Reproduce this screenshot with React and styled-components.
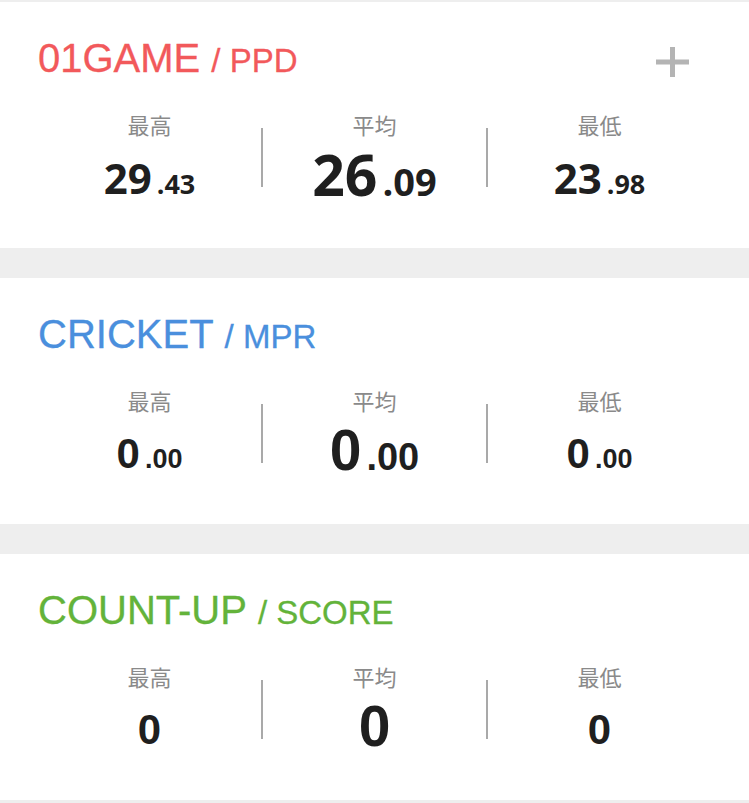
import React from "react";
import styled, { createGlobalStyle } from "styled-components";

const Global = createGlobalStyle`
  html, body { margin: 0; padding: 0; background: #eeeeee; }
  body { font-family: "Liberation Sans", Arial, sans-serif; }
  * { box-sizing: border-box; }
`;

const Page = styled.div`
  display: flex;
  flex-direction: column;
  gap: 30px;
  padding: 2px 0 4px;
  background: #eeeeee;
  width: 749px;
`;

const Card = styled.section`
  background: #ffffff;
  height: 246px;
  padding: 36px 38px 0;
  display: flex;
  flex-direction: column;
`;

const Header = styled.div`
  display: flex;
  align-items: flex-start;
  justify-content: space-between;
  height: 40px;
`;

const Title = styled.h2`
  margin: 0;
  display: flex;
  align-items: baseline;
  font-family: "Liberation Sans", Arial, sans-serif;
  font-weight: 400;
  font-size: 40px;
  line-height: 40px;
  color: ${(p) => p.$color};
  white-space: nowrap;
  -webkit-text-stroke: 0.3px ${(p) => p.$color};
`;

const Unit = styled.span`
  font-size: 33px;
  margin-left: 11px;
`;

const AddButton = styled.button`
  border: 0;
  background: none;
  padding: 0;
  margin: 9px 22px 0 0;
  width: 33px;
  height: 30px;
  display: flex;
  cursor: pointer;
`;

const Stats = styled.div`
  display: flex;
  align-items: flex-start;
  margin-top: 32px;
`;

const Column = styled.div`
  flex: 1;
  display: flex;
  flex-direction: column;
  align-items: center;
`;

const Label = styled.div`
  font-family: "Noto Sans CJK JP", "Noto Sans CJK SC", sans-serif;
  font-size: 22px;
  line-height: 28px;
  color: #8a8a8a;
`;

const Value = styled.div`
  display: flex;
  align-items: baseline;
  margin-top: ${(p) => (p.$big ? "8px" : "19px")};
  font-family: ${(p) => p.$font};
  font-weight: 700;
  color: #1f1f1f;
`;

const Int = styled.span`
  font-size: ${(p) => (p.$big ? "57px" : "42px")};
  line-height: 1;
`;

const Dec = styled.span`
  font-size: ${(p) => (p.$big ? "38px" : "27px")};
  line-height: 1;
  margin-left: ${(p) => (p.$big ? "5px" : "5px")};
`;

const Divider = styled.div`
  width: 2px;
  height: 59px;
  margin-top: 18px;
  background: #a9a9a9;
  flex: none;
`;

const PlusIcon = () => (
  <svg width="33" height="30" viewBox="0 0 33 30">
    <rect x="0" y="12.5" width="33" height="5" fill="#b4b4b4" />
    <rect x="14" y="0" width="5" height="30" fill="#b4b4b4" />
  </svg>
);

const Stat = ({ label, value, big, font }) => {
  const [i, d] = value.split(".");
  return (
    <Column>
      <Label>{label}</Label>
      <Value $big={big} $font={font}>
        <Int $big={big}>{i}</Int>
        {d !== undefined && <Dec $big={big}>.{d}</Dec>}
      </Value>
    </Column>
  );
};

const sections = [
  {
    name: "01GAME",
    unit: "PPD",
    color: "#f2595b",
    font: '"Open Sans", "Noto Sans", sans-serif',
    values: ["29.43", "26.09", "23.98"],
    add: true,
  },
  {
    name: "CRICKET",
    unit: "MPR",
    color: "#4a8fdd",
    font: '"Liberation Sans", Arial, sans-serif',
    values: ["0.00", "0.00", "0.00"],
  },
  {
    name: "COUNT-UP",
    unit: "SCORE",
    color: "#63b33a",
    font: '"Liberation Sans", Arial, sans-serif',
    values: ["0", "0", "0"],
  },
];

export default function App() {
  return (
    <>
      <Global />
      <Page>
        {sections.map((s) => (
          <Card key={s.name}>
            <Header>
              <Title $color={s.color}>
                {s.name}
                <Unit>/ {s.unit}</Unit>
              </Title>
              {s.add && (
                <AddButton aria-label="add">
                  <PlusIcon />
                </AddButton>
              )}
            </Header>
            <Stats>
              <Stat label="最高" value={s.values[0]} font={s.font} />
              <Divider />
              <Stat label="平均" value={s.values[1]} font={s.font} big />
              <Divider />
              <Stat label="最低" value={s.values[2]} font={s.font} />
            </Stats>
          </Card>
        ))}
      </Page>
    </>
  );
}
